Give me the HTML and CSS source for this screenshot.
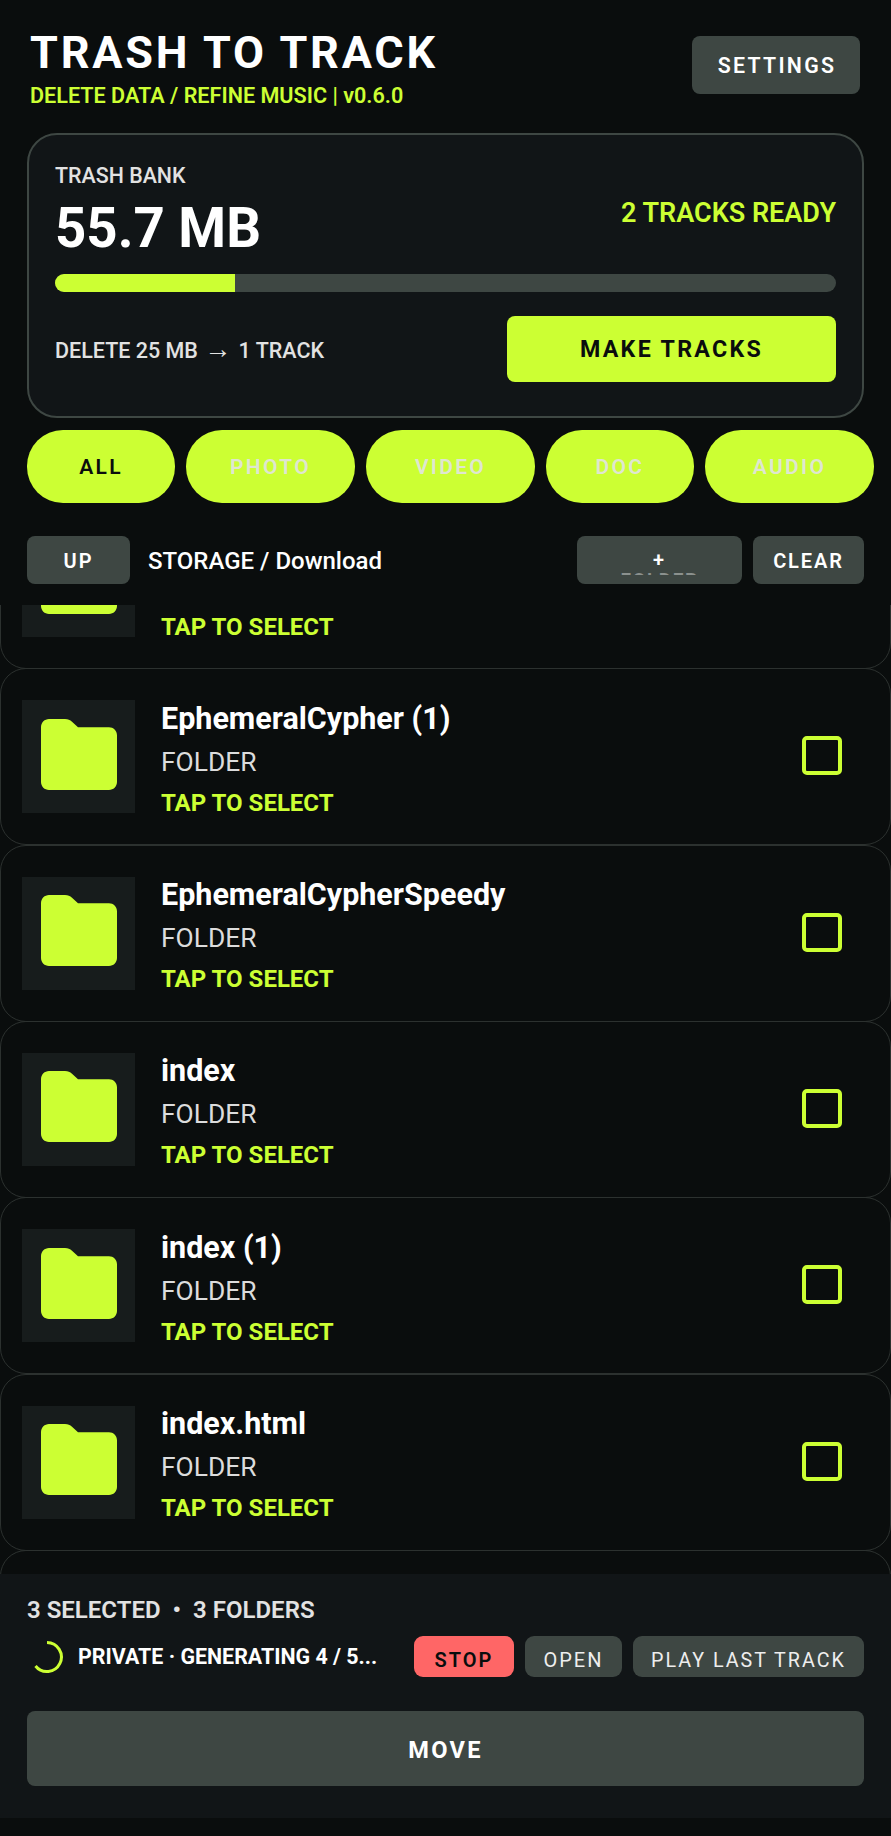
FILE: index.html
```html
<!DOCTYPE html>
<html lang="en">
<head>
<meta charset="utf-8">
<title>Trash to Track</title>
<link rel="stylesheet" href="styles.css">
</head>
<body>
<div class="app">
  <header class="top">
    <div class="brand">
      <h1 class="title">TRASH TO TRACK</h1>
      <p class="subtitle">DELETE DATA / REFINE MUSIC | v0.6.0</p>
    </div>
    <button class="btn settings">SETTINGS</button>
  </header>

  <section class="bank">
    <div class="bank-head">
      <div>
        <div class="bank-label">TRASH BANK</div>
        <div class="bank-size">55.7 MB</div>
      </div>
      <div class="bank-ready">2 TRACKS READY</div>
    </div>
    <div class="bar"><div class="bar-fill"></div></div>
    <div class="bank-foot">
      <div class="rate">DELETE 25 MB <span class="arrow">→</span> 1 TRACK</div>
      <button class="make">MAKE TRACKS</button>
    </div>
  </section>

  <nav class="filters">
    <button class="pill pill-on pill-all">ALL</button>
    <button class="pill">PHOTO</button>
    <button class="pill">VIDEO</button>
    <button class="pill pill-doc">DOC</button>
    <button class="pill">AUDIO</button>
  </nav>

  <div class="path">
    <button class="btn up">UP</button>
    <div class="crumb">STORAGE / Download</div>
    <button class="btn add"><div class="add-inner"><div class="add-plus">+</div><div class="add-clip">FOLDER</div></div></button>
    <button class="btn clear">CLEAR</button>
  </div>

  <div class="list">
    <div class="rows">
      <article class="row"><div class="thumb"><svg class="folder" viewBox="0 0 76 71"><use href="#f"/></svg></div><div class="info"><div class="name"></div><div class="kind"></div><div class="tap">TAP TO SELECT</div></div><div class="check"></div></article>
      <article class="row"><div class="thumb"><svg class="folder" viewBox="0 0 76 71"><use href="#f"/></svg></div><div class="info"><div class="name">EphemeralCypher (1)</div><div class="kind">FOLDER</div><div class="tap">TAP TO SELECT</div></div><div class="check"></div></article>
      <article class="row"><div class="thumb"><svg class="folder" viewBox="0 0 76 71"><use href="#f"/></svg></div><div class="info"><div class="name">EphemeralCypherSpeedy</div><div class="kind">FOLDER</div><div class="tap">TAP TO SELECT</div></div><div class="check"></div></article>
      <article class="row"><div class="thumb"><svg class="folder" viewBox="0 0 76 71"><use href="#f"/></svg></div><div class="info"><div class="name">index</div><div class="kind">FOLDER</div><div class="tap">TAP TO SELECT</div></div><div class="check"></div></article>
      <article class="row"><div class="thumb"><svg class="folder" viewBox="0 0 76 71"><use href="#f"/></svg></div><div class="info"><div class="name">index (1)</div><div class="kind">FOLDER</div><div class="tap">TAP TO SELECT</div></div><div class="check"></div></article>
      <article class="row"><div class="thumb"><svg class="folder" viewBox="0 0 76 71"><use href="#f"/></svg></div><div class="info"><div class="name">index.html</div><div class="kind">FOLDER</div><div class="tap">TAP TO SELECT</div></div><div class="check"></div></article>
      <article class="row"></article>
    </div>
  </div>

  <footer class="panel">
    <div class="selected">3 SELECTED <span class="dot">•</span> 3 FOLDERS</div>
    <div class="status">
      <svg class="spinner" viewBox="0 0 36 36"><path d="M18 3.5A14.5 14.5 0 1 1 6.500 27"/></svg>
      <div class="status-text">PRIVATE · GENERATING 4 / 5...</div>
      <button class="mini stop">STOP</button>
      <button class="mini open">OPEN</button>
      <button class="mini play">PLAY LAST TRACK</button>
    </div>
    <button class="btn move">MOVE</button>
  </footer>
  <div class="navgap"></div>
</div>
<svg class="defs" width="0" height="0"><defs><path id="f" d="M8 0H24C27 0 29 .8 31 2.8L37 8.300H68C72.400 8.300 76 11.800 76 16.300V63C76 67.400 72.400 71 68 71H8C3.600 71 0 67.400 0 63V8C0 3.600 3.600 0 8 0Z"/></defs></svg>
</body>
</html>
```

FILE: styles.css
```css
* { box-sizing: border-box; }
html, body { margin: 0; padding: 0; background: #0a0d0d; }
body { font-family: Roboto, "Liberation Sans", sans-serif; color: #fff; }
button { font-family: inherit; border: 0; padding: 0; cursor: pointer; }
.defs { display: block; height: 0; }

.app { width: 891px; height: 1836px; display: flex; flex-direction: column; overflow: hidden; background: #0a0d0d; }

.top { display: flex; justify-content: space-between; align-items: flex-start; padding: 28px 27px 0 30px; height: 133px; }
.title { margin: 0; font-size: 45px; line-height: 50px; font-weight: 700; letter-spacing: 2.75px; }
.subtitle { margin: 6px 0 0; font-size: 21.6px; line-height: 24px; font-weight: 600; color: #ccff33; }

.btn { background: #3e4743; color: #fff; border-radius: 8px; font-weight: 600; }
.settings { width: 168px; height: 58px; margin: 8px 4px 0 0; padding-left: 2px; font-size: 21.3px; letter-spacing: 2.3px; }

.bank { margin: 0 27px; width: 837px; height: 285px; background: #111517; border: 2px solid #3e4743; border-radius: 30px; padding: 29px 26px 0; }
.bank-head { display: flex; justify-content: space-between; align-items: flex-start; height: 110px; }
.bank-label { font-size: 21.4px; line-height: 24px; font-weight: 500; color: #e2e2e2; }
.bank-size { margin-top: 9px; font-size: 54.6px; line-height: 62px; font-weight: 700; }
.bank-ready { margin-top: 34px; font-size: 27px; line-height: 30px; font-weight: 600; color: #ccff33; }
.bar { height: 18px; background: #3e4743; border-radius: 9px; overflow: hidden; }
.bar-fill { width: 180px; height: 100%; background: #ccff33; }
.bank-foot { display: flex; justify-content: space-between; align-items: center; margin-top: 24px; }
.rate { font-size: 21.5px; line-height: 24px; font-weight: 500; color: #e2e2e2; padding-top: 4px; }
.arrow { margin: 0 2px 0 1px; font-size: 27px; line-height: 20px; font-weight: 700; }
.make { width: 329px; height: 66px; background: #ccff33; color: #0a0d0d; border-radius: 8px; font-size: 23.2px; font-weight: 700; letter-spacing: 2.3px; }

.filters { display: flex; gap: 11px; padding: 12px 0 0 27px; }
.pill { width: 169px; height: 73px; border-radius: 36px; background: #ccff33; color: #dfe6d0; font-size: 21px; font-weight: 600; letter-spacing: 2.3px; flex: none; }
.pill-all, .pill-doc { width: 148px; }
.pill-on { color: #0a0d0d; }

.path { display: flex; align-items: center; padding: 33px 27px 0; }
.up { width: 103px; height: 48px; font-size: 20px; letter-spacing: 1.9px; flex: none; padding-top: 1px; }
.crumb { margin-left: 18px; flex: 1; font-size: 24px; line-height: 28px; font-weight: 500; padding-top: 2px; }
.add { width: 165px; height: 48px; margin-right: 11px; font-size: 20px; letter-spacing: 1.9px; padding: 13px 0 9px; }
.add-inner { height: 26px; overflow: hidden; }
.add-plus { line-height: 22px; height: 22px; }
.add-clip { margin-top: 2px; font-size: 19px; line-height: 14px; letter-spacing: 1.5px; opacity: .4; }
.clear { width: 111px; height: 48px; font-size: 20px; letter-spacing: 1.9px; flex: none; padding-top: 1px; }

.list { flex: 1; min-height: 0; margin-top: 21px; overflow: hidden; }
.rows { margin-top: -113px; display: flex; flex-direction: column; }
.row { flex: none; height: 177px; margin-bottom: -.7px; border: 1px solid #2c312f; border-radius: 26px; display: flex; align-items: center; padding: 0 48px 0 21px; }
.thumb { width: 113px; height: 113px; background: #171c1c; display: flex; align-items: center; justify-content: center; flex: none; padding-bottom: 5px; }
.folder { width: 76px; height: 71px; fill: #ccff33; display: block; }
.info { flex: 1; margin-left: 26px; padding-top: 4px; }
.name { font-size: 30.5px; line-height: 36px; height: 36px; font-weight: 700; }
.kind { margin-top: 10px; font-size: 26.4px; line-height: 30px; height: 30px; font-weight: 400; color: #dcdcdc; }
.tap { margin-top: 12px; font-size: 24px; line-height: 28px; font-weight: 700; color: #ccff33; }
.check { width: 40px; height: 39px; border: 4px solid #ccff33; border-radius: 5px; flex: none; position: relative; top: -1px; }

.panel { height: 244px; flex: none; background: #111517; padding: 22px 27px 0; }
.selected { font-size: 24px; line-height: 28px; font-weight: 600; color: #e2e2e2; }
.dot { margin: 0 6px; }
.status { display: flex; align-items: center; margin-top: 12px; height: 41px; }
.spinner { width: 36px; height: 36px; flex: none; margin-left: 2px; fill: none; stroke: #ccff33; stroke-width: 3; }
.status-text { margin-left: 13px; width: 336px; font-size: 21.4px; line-height: 26px; font-weight: 700; white-space: nowrap; flex: none; }
.mini { height: 41px; border-radius: 9px; font-size: 20px; letter-spacing: 2px; background: #3e4743; color: #eee; padding-top: 7px; flex: none; }
.stop { width: 100px; background: #ff6666; color: #0a0d0d; font-weight: 600; }
.open { width: 97px; margin-left: 11px; }
.play { width: 231px; margin-left: 11px; font-size: 19.7px; }
.move { display: block; width: 837px; height: 75px; margin-top: 34px; padding-top: 3px; font-size: 23.6px; font-weight: 700; letter-spacing: 2.3px; }
.navgap { height: 18px; flex: none; }
```
